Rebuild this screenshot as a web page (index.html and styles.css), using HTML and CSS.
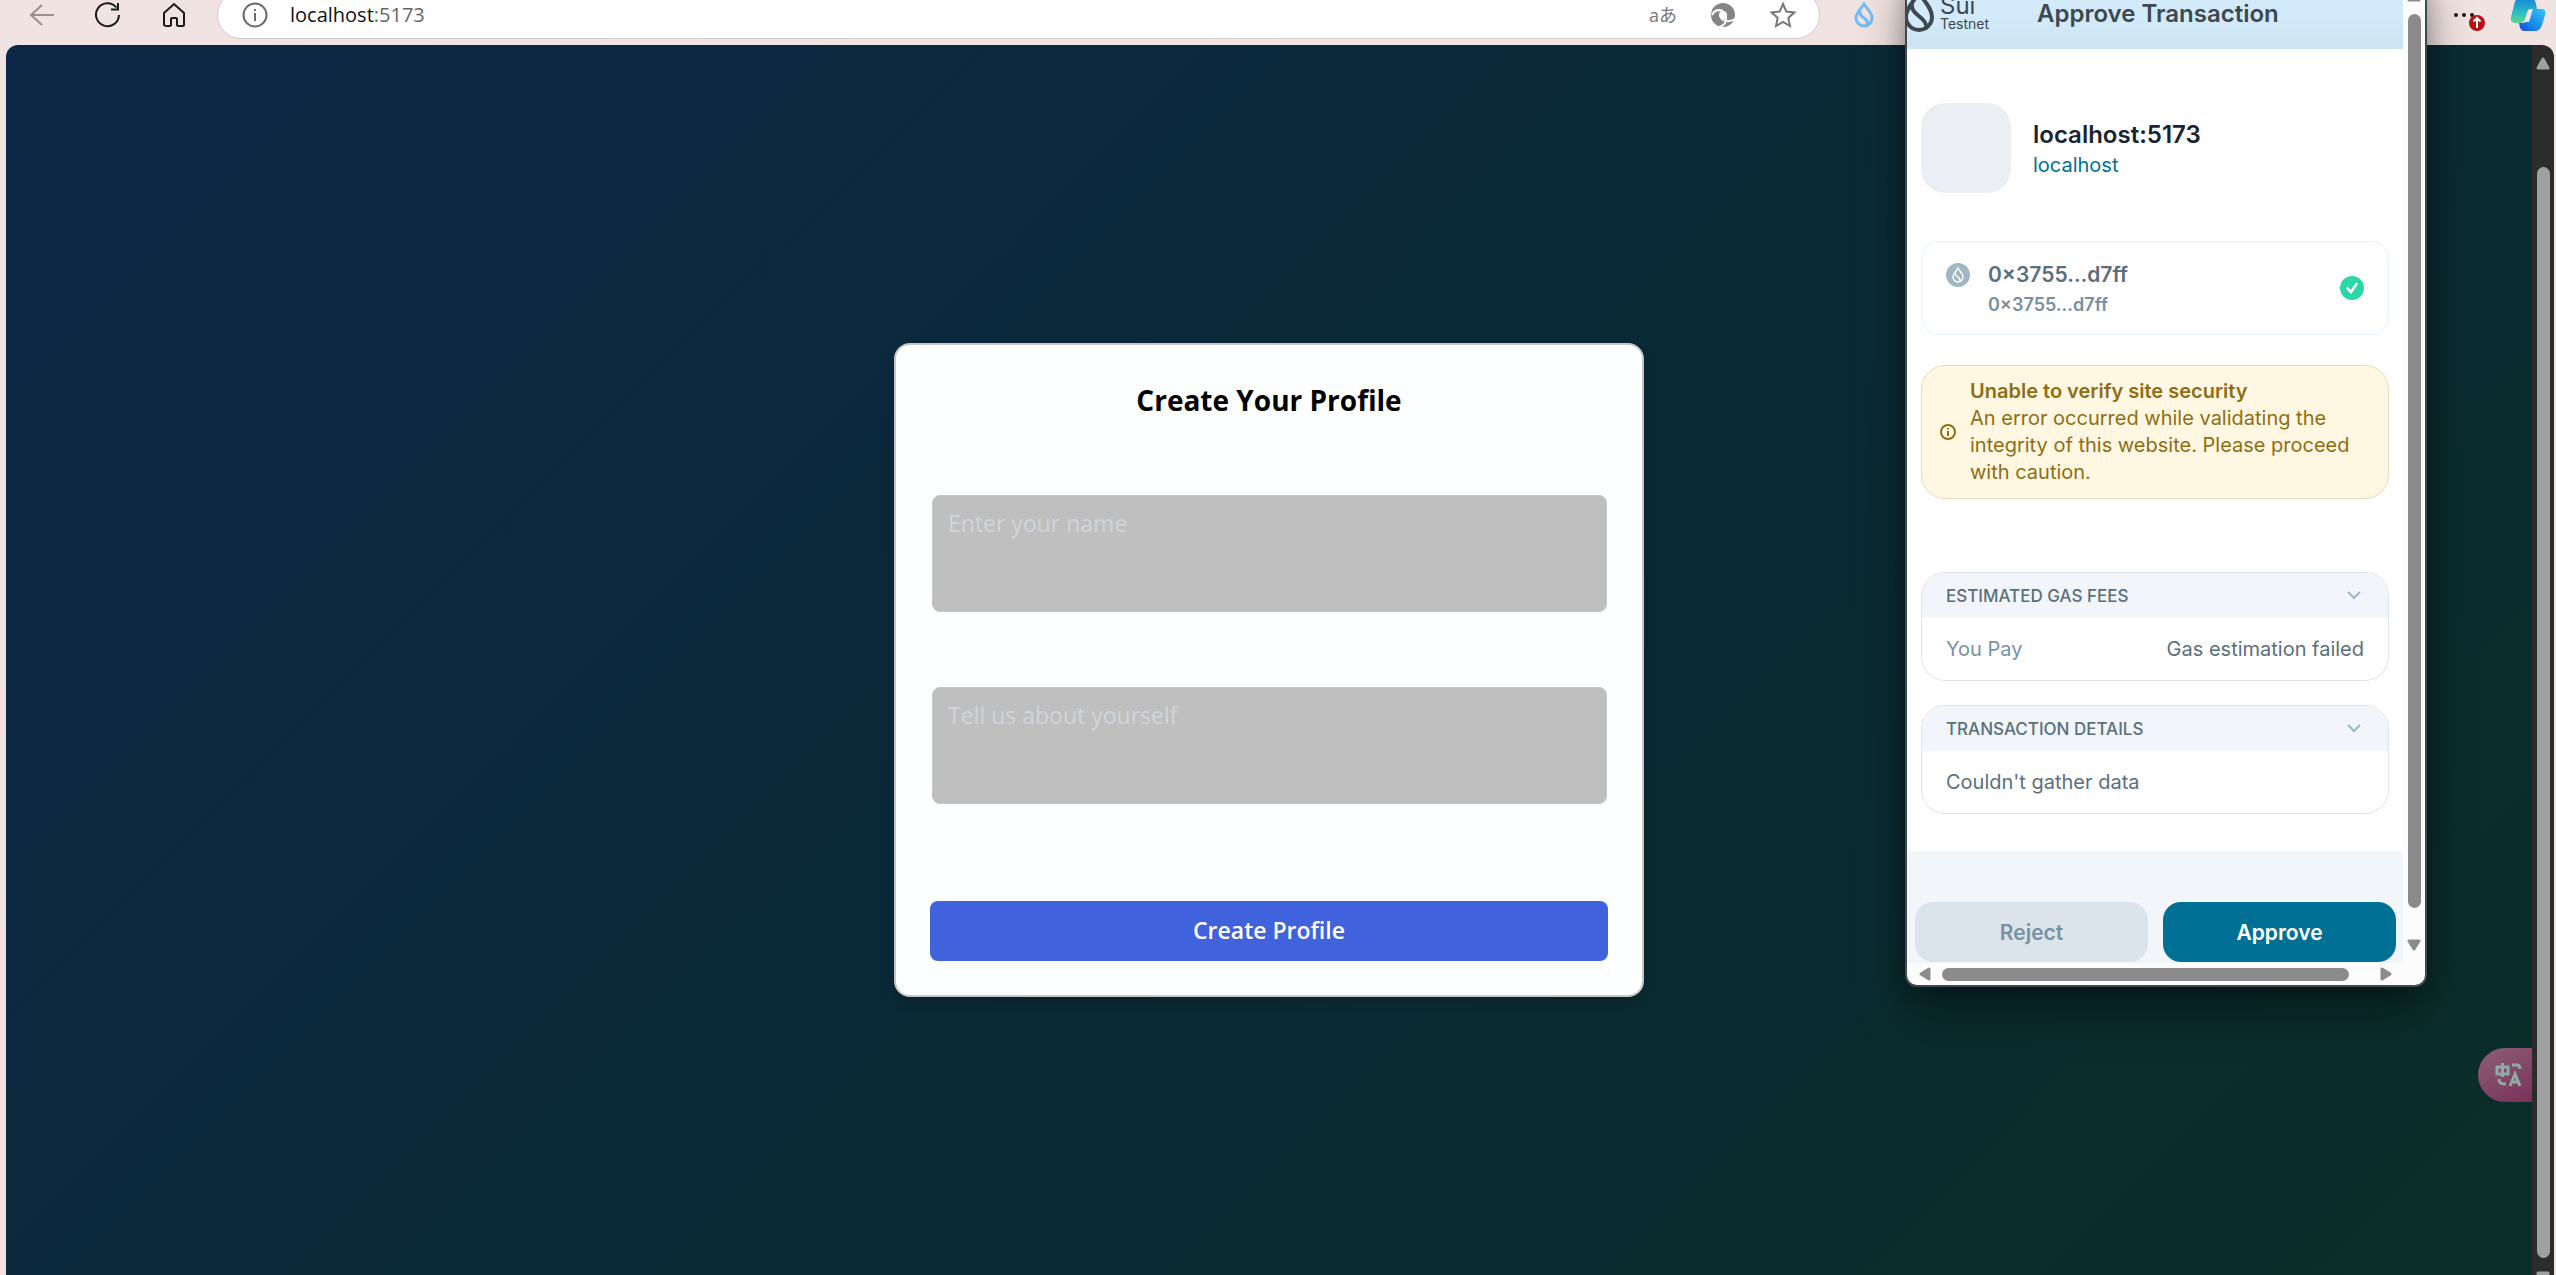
FILE: index.html
```
<!DOCTYPE html>
<html lang="en">
<head>
<meta charset="utf-8">
<title>localhost:5173</title>
<link rel="stylesheet" href="styles.css">
</head>
<body>
<div class="browser">
  <header class="toolbar">
    <nav class="nav">
      <button class="tool back" aria-label="Back"><svg width="28" height="28" viewBox="0 0 28 28"><path d="M26 14H3M14 4L3 14l11 10"/></svg></button>
      <button class="tool" aria-label="Refresh"><svg width="28" height="28" viewBox="0 0 28 28"><path d="M25 14a11.500 11.500 0 1 1-2.500-7.500M24 2v6.500h-7"/></svg></button>
      <button class="tool" aria-label="Home"><svg width="28" height="28" viewBox="0 0 28 28"><path d="M4 12L14 3l10 9v11.500q0 1.500-1.500 1.500h-4q-1.500 0-1.500-1.500V18q0-1-1-1h-4q-1 0-1 1v5.500q0 1.500-1.500 1.500h-2Q4 25 4 23.500z"/></svg></button>
    </nav>
    <div class="address">
      <svg class="info" width="26" height="26" viewBox="0 0 26 26"><circle cx="13" cy="13" r="11.500"/><path d="M13 11v8M13 7v2"/></svg>
      <p class="url">localhost<span>:5173</span></p>
      <div class="address-tools">
        <button class="tool read" aria-label="Translate page">aあ</button>
        <button class="tool swirl" aria-label="Shopping"><svg width="28" height="28" viewBox="0 0 28 28"><circle class="disc" cx="14" cy="14" r="12"/><path d="M14 10c-5-2-9 0-11 4M17 16c1 5-2 9-7 10M12 17c3 4 9 4 14 1"/><circle class="hub" cx="14" cy="14" r="4"/></svg></button>
        <button class="tool" aria-label="Favourite"><svg width="28" height="28" viewBox="0 0 28 28"><path class="star" d="M14 3l3.300 7.500 8 .9-6 5.500 1.700 8.100-7-4.200L7 25l1.700-8.100-6-5.500 8-.9z"/></svg></button>
      </div>
    </div>
    <button class="tool sui" aria-label="Sui Wallet"><svg width="20" height="28" viewBox="0 0 20 28"><path d="M10 3c4 6 8 9 8 14a8 8 0 0 1-16 0c0-5 4-8 8-14zM6 9c-1 4 1 6 4 8s4 5 3 8"/></svg></button>
    <div class="right-tools">
      <button class="tool more" aria-label="Settings and more"><svg width="36" height="32" viewBox="0 0 36 32"><g fill="#1a1a1a"><circle cx="6" cy="16" r="2"/><circle cx="14" cy="16" r="2"/><circle cx="22" cy="16" r="2"/></g><circle cx="27" cy="24" r="8" fill="#b91115"/><path d="M27 29V19M23.500 22.500L27 19l3.500 3.500"/></svg></button>
      <button class="tool copilot" aria-label="Copilot"><svg width="36" height="36" viewBox="0 0 36 36"><defs><linearGradient id="c1" x1="0" y1="0" x2="0" y2="1"><stop offset="0" stop-color="#1689d8"/><stop offset=".6" stop-color="#2ebfc0"/><stop offset="1" stop-color="#62d68b"/></linearGradient><linearGradient id="c2" x1="1" y1="0" x2="0" y2="1"><stop offset="0" stop-color="#35c5f4"/><stop offset=".6" stop-color="#1688ee"/><stop offset="1" stop-color="#1b45d8"/></linearGradient></defs><path class="right-lobe" d="M22 12h9q6 0 4 6l-3 10q-2 6-7 6H14q-4 0-5-8h3q5 0 6-5z"/><path class="left-lobe" d="M8 2h14q3 0 4 5l1 5h-5q-4 0-5 4l-2 6q-1 4-5 4H5q-5 0-4-6L4 8q1-6 4-6z"/><path class="hole" d="M19 12h4l-4 13h-5q2-1 3-5z"/></svg></button>
    </div>
  </header>

  <div class="viewport">
    <main class="page">
      <form class="profile">
        <h1>Create Your Profile</h1>
        <textarea aria-label="Name" placeholder="Enter your name"></textarea>
        <textarea aria-label="About you" placeholder="Tell us about yourself"></textarea>
        <button type="button" class="create">Create Profile</button>
      </form>
      <button class="translate" aria-label="Translate"><svg width="28" height="28" viewBox="0 0 28 28"><path d="M2 6h11v7H2zM7.500 2v14M17 4h5q3 0 3 4M4 18q0 5 5 5h2M15 25l5-12 5 12M17 21h6"/></svg></button>
    </main>
    <div class="page-scroll"><svg width="14" height="14" viewBox="0 0 14 14"><path d="M7 3l5 9H2z"/></svg><i class="thumb"></i><svg width="14" height="5" viewBox="0 0 14 5"><path d="M2 3h10v4H2z"/></svg></div>
  </div>
</div>

<section class="wallet" aria-label="Wallet">
  <div class="wallet-main">
    <div class="wallet-body">
      <header class="wallet-head">
        <svg class="drop" width="28" height="46" viewBox="0 0 28 46"><path d="M12 5c5 8 13 15 13 24a13 13 0 0 1-26 0C-1 20 7 13 12 5zM5 15c-1 7 3 10 8 14s7 7 6 12"/></svg>
        <p class="brand">Sui<small>Testnet</small></p>
        <h2>Approve Transaction</h2>
      </header>
      <div class="wallet-content">
        <div class="site"><span class="avatar"></span><div><h3>localhost:5173</h3><a href="#">localhost</a></div></div>
        <div class="account">
          <svg width="24" height="24" viewBox="0 0 24 24"><circle cx="12" cy="12" r="12" fill="#a0b6c3"/><path d="M12 5c2 4 5 5 5 9a5 5 0 0 1-10 0c0-4 3-5 5-9zM9 10c0 4 6 4 5 8" fill="none" stroke="#fff" stroke-width="1.500"/></svg>
          <div><strong>0×3755…d7ff</strong><small>0×3755…d7ff</small></div>
          <svg class="check" width="24" height="24" viewBox="0 0 24 24"><circle cx="12" cy="12" r="12" fill="#2cd7a7"/><path d="M7.500 12.500l3.500 3.500 5.500-8" fill="none" stroke="#fff" stroke-width="2.500" stroke-linecap="round"/></svg>
        </div>
        <div class="warning">
          <svg width="16" height="16" viewBox="0 0 16 16"><circle cx="8" cy="8" r="7"/><path d="M8 7v5M8 4v1.500"/></svg>
          <p><strong>Unable to verify site security</strong>An error occurred while validating the integrity of this website. Please proceed with caution.</p>
        </div>
        <section class="panel"><h4>ESTIMATED GAS FEES<svg width="14" height="9" viewBox="0 0 14 9"><path d="M1 1l6 6 6-6"/></svg></h4><p><span>You Pay</span><b>Gas estimation failed</b></p></section>
        <section class="panel"><h4>TRANSACTION DETAILS<svg width="14" height="9" viewBox="0 0 14 9"><path d="M1 1l6 6 6-6"/></svg></h4><p><b>Couldn't gather data</b></p></section>
      </div>
      <footer class="actions"><button class="reject">Reject</button><button class="approve">Approve</button></footer>
    </div>
    <div class="bar-y"><svg width="14" height="12" viewBox="0 0 14 12"><path d="M2 10h10L7 2z"/></svg><i class="thumb-y"></i><svg width="14" height="12" viewBox="0 0 14 12"><path d="M2 2h10l-5 8z"/></svg></div>
  </div>
  <div class="bar-x"><svg width="12" height="14" viewBox="0 0 12 14"><path d="M10 2v10L2 7z"/></svg><i class="thumb-x"></i><svg width="12" height="14" viewBox="0 0 12 14"><path d="M2 2v10l8-5z"/></svg></div>
</section>
</body>
</html>
```
FILE: styles.css
```
* { box-sizing: border-box; }
body { margin: 0; overflow: hidden; background: #f1e3e2; font-family: Inter, "Liberation Sans", sans-serif; }
h1, h2, h3, h4, p { margin: 0; }
button { border: 0; font: inherit; cursor: pointer; }
svg { display: block; flex: none; }

.browser { display: flex; flex-direction: column; height: 100vh; }
.toolbar { display: flex; align-items: center; flex: none; height: 61px; margin-top: -16px; padding-left: 28px; color: #1a1a1a; }
.tool { display: flex; align-items: center; padding: 0; background: none; }
.tool path { fill: none; stroke: #1a1a1a; stroke-width: 2; }
.nav { display: flex; gap: 38px; width: 189px; }
.back path { stroke: #9a8f8f; }
.address { display: flex; align-items: center; flex: 1; height: 48px; margin-right: 34px; padding: 0 22px 0 24px; border: 1px solid #cfcfcf; border-radius: 24px; background: #fff; }
.info { fill: none; stroke: #6a6a6a; stroke-width: 2; }
.url { margin-left: 22px; font: 20px/30px "Open Sans", sans-serif; color: #111; }
.url span { color: #666; }
.address-tools { display: flex; align-items: center; gap: 32px; margin-left: auto; }
.read { font: 18px/28px "Open Sans", "Noto Sans CJK JP", sans-serif; color: #777; }
.swirl path { stroke: #fff; }
.disc { fill: #858585; }
.hub { fill: #fff; }
.tool .star { stroke: #777; }
.sui path { stroke: #74bdf5; stroke-width: 3; }
.right-tools { display: flex; align-items: center; justify-content: flex-end; gap: 24px; width: 682px; padding-right: 10px; }
.more path { stroke: #fff; }
.copilot path { stroke: none; }
.copilot .left-lobe { fill: url(#c1); }
.copilot .right-lobe { fill: url(#c2); }
.copilot .hole { fill: #f2e4e3; }

.viewport { display: flex; flex: 1; min-height: 0; margin: 0 2px 0 6px; overflow: hidden; border-radius: 12px 12px 0 0; }
.page { position: relative; display: flex; align-items: center; justify-content: center; flex: 1; padding-top: 20px; background: linear-gradient(135deg, #0f2747 0%, #0a2a36 52%, #0a2e29 100%); }
.profile { display: flex; flex-direction: column; width: 750px; padding: 34px; border: 2px solid #c4c7ca; border-radius: 16px; background: #fdfefe; font-family: "Open Sans", sans-serif; box-shadow: 0 6px 12px rgba(0, 0, 0, .2); }
.profile h1 { margin-bottom: 74px; font-size: 28px; line-height: 42px; text-align: center; color: #000; }
.profile textarea { height: 117px; margin: 0 1px 75px 2px; padding: 10px 15px; resize: none; border: 1px solid #c3c6cb; border-radius: 8px; background: #bebfbe; font: 23px/34px "Open Sans", sans-serif; }
.profile textarea::placeholder { color: #d1d5db; opacity: 1; }
.create { height: 60px; margin-top: 22px; padding-bottom: 4px; border-radius: 8px; background: #4062dd; color: #fff; font-size: 23px; font-weight: 600; }
.translate { position: absolute; right: 0; top: 1003px; display: flex; align-items: center; width: 54px; height: 54px; padding: 0 0 0 17px; border-radius: 27px 0 0 27px; background: linear-gradient(150deg, #8b6078, #7a305a); }
.translate path { fill: none; stroke: #8fa9a8; stroke-width: 3; }
.page-scroll { display: flex; flex-direction: column; align-items: center; width: 22px; padding-top: 11px; background: #2c2c2c; }
.page-scroll svg { fill: #a0a0a0; stroke: #a0a0a0; stroke-width: 3; stroke-linejoin: round; }
.thumb { flex: 1; width: 13px; margin: 97px 0 12px; border-radius: 7px; background: #a0a0a0; }

.wallet { position: absolute; top: -32px; right: 129px; width: 522px; overflow: hidden; border: 2px solid #40494d; border-radius: 12px; background: #fcfcfc; box-shadow: 0 24px 48px rgba(0, 0, 0, .4), 0 0 20px rgba(0, 0, 0, .2); }
.wallet-main { display: flex; }
.wallet-body { flex: 1; }
.wallet-head { display: flex; align-items: center; height: 79px; padding-top: 8px; background: linear-gradient(#d3eafa 60%, #cce3f1); color: #3e484f; }
.drop { margin-top: -6px; fill: none; stroke: #3e484f; stroke-width: 4; }
.brand { width: 97px; margin-left: 5px; font-size: 24px; line-height: 20px; }
.brand small { display: block; font-size: 14px; line-height: 15px; }
.wallet-head h2 { font-size: 24px; line-height: 32px; font-weight: 600; }
.wallet-content { padding: 54px 14px 37px; background: #fff; }
.site { display: flex; align-items: center; gap: 22px; margin-bottom: 48px; }
.site div { padding-top: 2px; }
.avatar { width: 90px; height: 90px; border-radius: 24px; background: #ebeff3; }
.site h3 { font-size: 24px; line-height: 32px; font-weight: 600; color: #182435; }
.site a { display: block; font-size: 20px; line-height: 29px; color: #007195; text-decoration: none; }
.account { display: flex; height: 94px; margin-bottom: 30px; padding: 20px 24px; border: 1px solid #e3f2f8; border-radius: 18px; }
.account div { flex: 1; margin-left: 18px; }
.account strong { display: block; font-size: 21px; line-height: 26px; font-weight: 600; color: #5a6f7c; }
.account small { display: block; margin-top: 4px; font-size: 18px; line-height: 26px; font-weight: 600; color: #768f9f; }
.account svg:first-child { margin-top: 1px; }
.check { align-self: center; }
.warning { display: flex; align-items: center; gap: 14px; margin-bottom: 73px; padding: 12px 18px; border: 1px solid #e8dcb8; border-radius: 24px; background: #fff7e1; color: #8d6e15; }
.warning svg { fill: none; stroke: #8d6e15; stroke-width: 2; }
.warning p { font-size: 20px; line-height: 27px; }
.warning strong { display: block; font-weight: 600; }
.panel { margin-bottom: 24px; overflow: hidden; border: 1px solid #dfe3e6; border-radius: 24px; color: #5a6f7c; }
.panel:last-child { margin-bottom: 0; }
.panel h4 { display: flex; align-items: center; justify-content: space-between; height: 45px; padding: 0 27px 0 24px; background: #f2f5f9; font-size: 17px; font-weight: 500; }
.panel h4 svg { fill: none; stroke: #9fb6c4; stroke-width: 2; }
.panel p { display: flex; justify-content: space-between; padding: 16px 24px; font-size: 20px; line-height: 30px; }
.panel b { font-weight: 400; }
.panel span { color: #7992a3; }
.actions { display: flex; gap: 15px; padding: 51px 7px 1px 8px; background: #f2f5f9; }
.actions button { flex: 1; height: 60px; border-radius: 18px; font-size: 21px; font-weight: 600; }
.reject { background: #dce4eb; color: #7892a2; }
.approve { background: #007195; color: #fff; }
.bar-y { display: flex; flex-direction: column; align-items: center; width: 22px; padding: 20px 0 12px; }
.thumb-y { flex: 1; width: 13px; margin: 12px 0 31px; border-radius: 7px; background: #8b8b8b; }
.bar-y svg, .bar-x svg { fill: #8b8b8b; stroke: #8b8b8b; stroke-width: 3; stroke-linejoin: round; }
.bar-x { display: flex; align-items: center; height: 22px; padding: 0 33px 0 12px; }
.thumb-x { flex: 1; height: 13px; margin: 0 31px 0 11px; border-radius: 7px; background: #8b8b8b; }
```
